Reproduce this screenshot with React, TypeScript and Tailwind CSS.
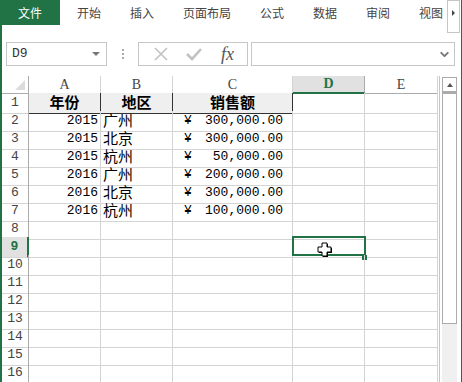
import { ChevronDown } from 'lucide-react';

const rows: { year: string; city: string; amount: string }[] = [
  { year: '2015', city: '广州', amount: '300,000.00' },
  { year: '2015', city: '北京', amount: '300,000.00' },
  { year: '2015', city: '杭州', amount: '50,000.00' },
  { year: '2016', city: '广州', amount: '200,000.00' },
  { year: '2016', city: '北京', amount: '300,000.00' },
  { year: '2016', city: '杭州', amount: '100,000.00' },
];

const tabs = ['开始', '插入', '页面布局', '公式', '数据', '审阅', '视图'];

const mono = { fontFamily: '"Liberation Mono", "Noto Sans CJK SC", monospace' };
const cjk = { fontFamily: '"Noto Sans CJK SC", "Liberation Sans", sans-serif' };
const serif = { fontFamily: '"Liberation Serif", "Noto Sans CJK SC", serif' };

const TabBar = () => (
  <div className="relative flex h-[25px] items-center text-[12px] text-[#444]" style={cjk}>
    <div className="flex h-[25px] w-[60px] items-center justify-center bg-[#217346] text-white">文件</div>
    <div className="ml-[17px] flex gap-[29px]">
      {tabs.map((t) => (
        <span key={t}>{t}</span>
      ))}
    </div>
    <div className="absolute right-[1px] top-0 flex h-[33px] w-[13px] items-center justify-center border border-[#c6c6c6] bg-white pb-[7px]">
      <div className="h-0 w-0 border-y-[3px] border-l-[3px] border-y-transparent border-l-[#444]" />
    </div>
  </div>
);

const FormulaBar = () => (
  <div className="flex h-[51px] items-start pl-[4px] pt-[17px]">
    <div className="flex h-[24px] w-[101px] items-center justify-between border border-[#c6c6c6] bg-white pl-[5px] pr-[6px] text-[13px] text-[#333]" style={mono}>
      <span>D9</span>
      <div className="h-0 w-0 border-x-[4px] border-t-[4px] border-x-transparent border-t-[#777]" />
    </div>
    <div className="flex h-[24px] w-[31px] flex-col items-center justify-center gap-[2px]">
      <div className="h-[2px] w-[2px] bg-[#aaa]" />
      <div className="h-[2px] w-[2px] bg-[#aaa]" />
      <div className="h-[2px] w-[2px] bg-[#aaa]" />
    </div>
    <div className="flex h-[24px] w-[110px] items-center border border-[#c6c6c6] bg-white">
      <svg width="14" height="14" viewBox="0 0 14 14" className="ml-[15px]">
        <path d="M1 1 L13 13 M13 1 L1 13" stroke="#c2c2c2" strokeWidth="1.6" fill="none" />
      </svg>
      <svg width="16" height="14" viewBox="0 0 16 14" className="ml-[18px]">
        <path d="M1 7 L6 12 L15 2" stroke="#c2c2c2" strokeWidth="2.6" fill="none" />
      </svg>
      <span className="ml-[19px] text-[18px] italic leading-none text-[#555]" style={{ fontFamily: '"Liberation Serif", serif' }}>
        fx
      </span>
    </div>
    <div className="ml-[3px] flex h-[24px] w-[204px] items-center justify-end border border-[#c6c6c6] bg-white pr-[3px]">
      <ChevronDown size={13} strokeWidth={3.5} color="#777" />
    </div>
  </div>
);

const Cursor = () => (
  <svg width="16" height="16" viewBox="0 0 16 16" className="absolute left-[24px] top-[5px]">
    <path d="M6 2 H11 V6 H15 V11 H11 V15 H6 V11 H2 V6 H6 Z" fill="#000" />
    <path d="M5 1 H10 V5 H14 V10 H10 V14 H5 V10 H1 V5 H5 Z" fill="#fff" stroke="#000" strokeWidth="1" />
  </svg>
);

const Sheet = () => {
  const grid = 'grid grid-cols-[27px_72px_72px_120px_72px_73px]';
  const letters = ['A', 'B', 'C', 'D', 'E'];

  return (
    <div className="flex">
      <div className="w-[436px]">
        <div className={`${grid} h-[17px] text-[14px] leading-[16px] text-[#444]`} style={serif}>
          <div className="relative border-b border-r border-[#ababab]">
            <div className="absolute bottom-[3px] right-[3px] h-0 w-0 border-b-[10px] border-l-[10px] border-b-[#dcdcdc] border-l-transparent" />
          </div>
          {letters.map((l) =>
            l === 'D' ? (
              <div key={l} className="flex items-center justify-center border-b-2 border-r border-b-[#217346] border-r-[#ababab] bg-[#e1e1e1] font-bold text-[#217346]">
                {l}
              </div>
            ) : (
              <div key={l} className="flex items-center justify-center border-b border-r border-b-[#ababab] border-r-[#d4d4d4]">
                {l}
              </div>
            )
          )}
        </div>

        <div className={`${grid} h-[18px]`}>
          <div className="flex items-center justify-center border-b border-r border-b-[#d4d4d4] border-r-[#ababab] text-[13px] text-[#444]" style={mono}>1</div>
          {['年份', '地区', '销售额'].map((h) => (
            <div key={h} className="flex items-center justify-center border-b border-r border-[#333] bg-[#efefef] pb-[2px] text-[15px] font-bold leading-[15px] text-black" style={cjk}>
              {h}
            </div>
          ))}
          <div className="border-b border-r border-[#d4d4d4]" />
          <div className="border-b border-r border-[#d4d4d4]" />
        </div>

        {rows.map((r, i) => (
          <div key={i} className={`${grid} h-[18px] text-black`}>
            <div className="flex items-center justify-center border-b border-r border-b-[#d4d4d4] border-r-[#ababab] text-[13px] text-[#444]" style={mono}>{i + 2}</div>
            <div className="flex items-center justify-end border-b border-r border-[#d4d4d4] pr-[2px] text-[13px]" style={mono}>{r.year}</div>
            <div className="flex items-center border-b border-r border-[#d4d4d4] pb-[2px] pl-[2px] text-[15px] leading-[15px]" style={cjk}>{r.city}</div>
            <div className="flex items-center justify-between border-b border-r border-[#d4d4d4] pl-[11px] pr-[9px] text-[13px]" style={mono}>
              <span>¥</span>
              <span>{r.amount}</span>
            </div>
            <div className="border-b border-r border-[#d4d4d4]" />
            <div className="border-b border-r border-[#d4d4d4]" />
          </div>
        ))}

        {Array.from({ length: 9 }, (_, k) => k + 8).map((n) => (
          <div key={n} className={`${grid} h-[18px]`}>
            {n === 9 ? (
              <div className="flex items-center justify-center border-b border-r-2 border-b-[#d4d4d4] border-r-[#217346] bg-[#e1e1e1] text-[13px] font-bold text-[#217346]" style={mono}>9</div>
            ) : (
              <div className="flex items-center justify-center border-b border-r border-b-[#d4d4d4] border-r-[#ababab] text-[13px] text-[#444]" style={mono}>{n}</div>
            )}
            <div className="border-b border-r border-[#d4d4d4]" />
            <div className="border-b border-r border-[#d4d4d4]" />
            <div className="border-b border-r border-[#d4d4d4]" />
            <div className="relative border-b border-r border-[#d4d4d4]">
              {n === 9 && (
                <>
                  <div className="absolute -left-px -top-px h-[20px] w-[74px] border-2 border-[#217346]" />
                  <div className="absolute -bottom-[3px] -right-[3px] h-[5px] w-[5px] bg-[#217346]" />
                  <Cursor />
                </>
              )}
            </div>
            <div className="border-b border-r border-[#d4d4d4]" />
          </div>
        ))}
      </div>

      <div className="ml-[1px] h-[306px] w-[1px] bg-[#c6c6c6]" />
      <div className="ml-[2px] mt-px flex w-[15px] flex-col bg-[#f0f0f0]">
        <div className="flex h-[15px] items-center justify-center border border-[#ababab] bg-white">
          <div className="h-0 w-0 border-x-[3px] border-b-[4px] border-x-transparent border-b-[#555]" />
        </div>
        <div className="h-[232px] border border-t-2 border-[#ababab] bg-white" />
      </div>
    </div>
  );
}

export default function App() {
  return (
    <div className="relative h-[382px] w-[462px] overflow-hidden border-r border-[#217346] bg-white">
      <TabBar />
      <div className="h-[357px] border-l-2 border-[#217346]">
        <FormulaBar />
        <Sheet />
      </div>
    </div>
  );
}
